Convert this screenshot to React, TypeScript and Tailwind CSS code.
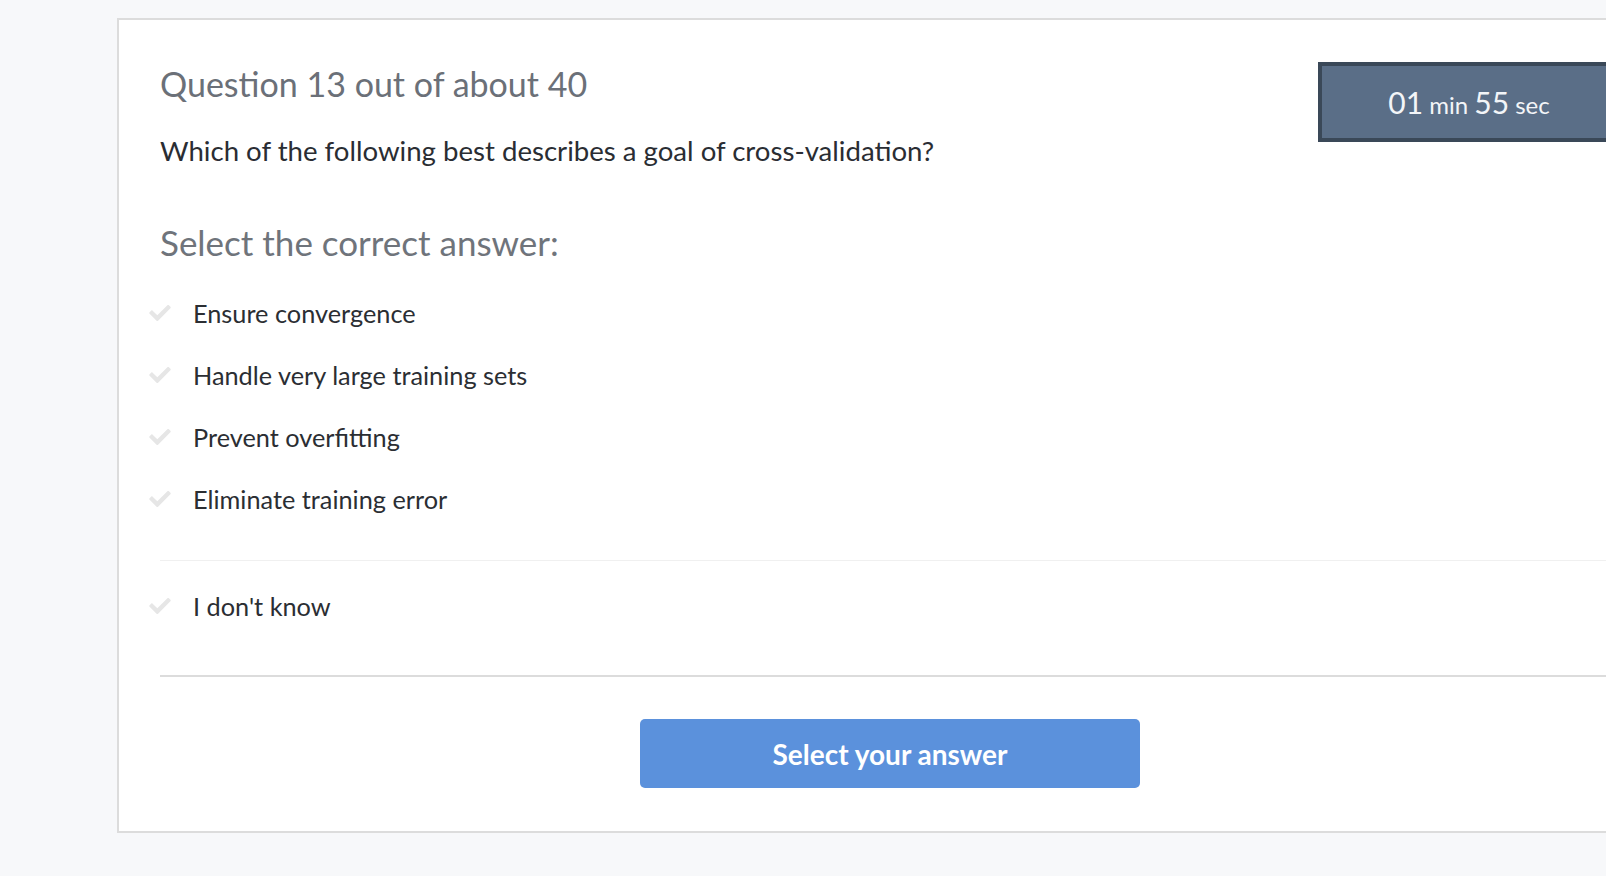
import React from 'react';

const CheckIcon = () => (
  <svg viewBox="0 65 512 382" className="w-[22px] h-[16px] shrink-0" fill="#e6e6e6">
    <path d="M173.898 439.404l-166.4-166.4c-9.997-9.997-9.997-26.206 0-36.204l36.203-36.204c9.997-9.998 26.207-9.998 36.204 0L192 312.69 432.095 72.596c9.997-9.997 26.207-9.997 36.204 0l36.203 36.204c9.997 9.997 9.997 26.206 0 36.204l-294.4 294.401c-9.998 9.997-26.207 9.997-36.204-.001z" />
  </svg>
);

const Option = ({ label }: { label: string }) => (
  <div className="flex items-center h-[62px] -ml-[11px] cursor-pointer">
    <CheckIcon />
    <span className="ml-[22px] text-[25.3px] leading-[62px] text-[#2b2e33]">{label}</span>
  </div>
);

const answers = [
  'Ensure convergence',
  'Handle very large training sets',
  'Prevent overfitting',
  'Eliminate training error',
];

export default function App() {
  return (
    <div
      className="w-[1606px] h-[876px] overflow-hidden bg-[#f7f8fa] pt-[18px] pl-[117px]"
      style={{ fontFamily: 'Lato, "Open Sans", sans-serif' }}
    >
      <div className="w-[1546px] bg-white border-2 border-[#dcdcdc] pt-[42px] pl-[41px] pr-[41px] pb-[43px]">
        {/* header */}
        <div className="flex items-start justify-between">
          <div>
            <h1 className="text-[34px] leading-[43px] text-[#6b7078]">Question 13 out of about 40</h1>
            <p className="mt-[29px] text-[27.6px] leading-[34px] text-[#2a2d33]">
              Which of the following best describes a goal of cross-validation?
            </p>
          </div>
          <div className="w-[302px] h-[80px] bg-[#5a6e87] border-4 border-[#3a4858] text-center leading-[72px] text-[#f3f5f8]">
            <span className="text-[30px]">01</span>
            <span className="text-[24px]"> min </span>
            <span className="text-[30px]">55</span>
            <span className="text-[24px]"> sec</span>
          </div>
        </div>

        <h2 className="mt-[54px] text-[35px] leading-[41px] text-[#6f747b]">Select the correct answer:</h2>

        <div className="mt-[19px]">
          {answers.map((a) => (
            <Option key={a} label={a} />
          ))}
        </div>

        <div className="mt-[30px] h-px bg-[#f0f0f0]" />

        <div className="mt-[14px]">
          <Option label="I don't know" />
        </div>

        <div className="mt-[38px] h-[2px] bg-[#dcdcdc]" />

        <div className="mt-[42px] flex justify-center">
          <button className="w-[500px] h-[69px] rounded-[5px] bg-[#5b91dc] text-white text-[28px] font-bold">
            Select your answer
          </button>
        </div>
      </div>
    </div>
  );
}
